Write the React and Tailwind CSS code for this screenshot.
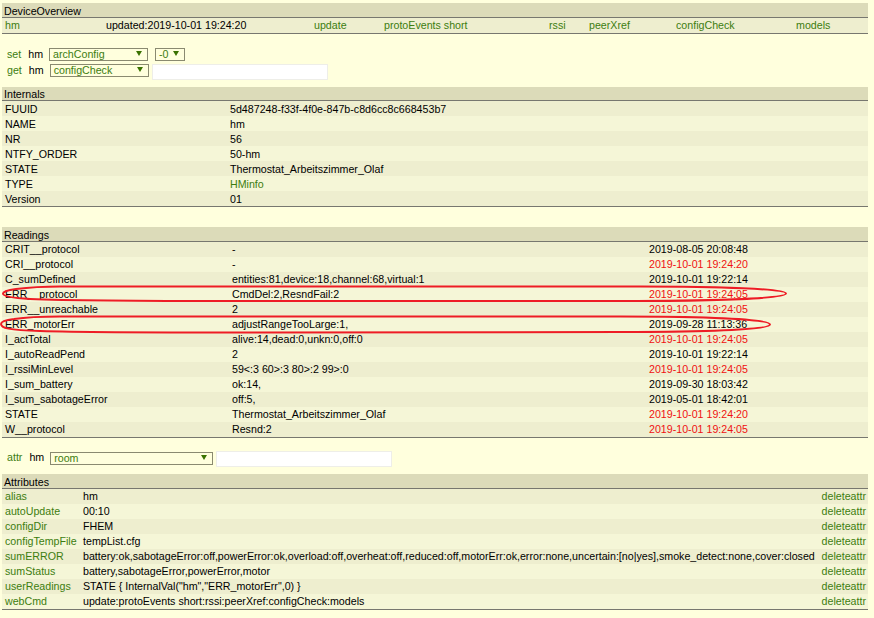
const internals = [
  ["FUUID", "5d487248-f33f-4f0e-847b-c8d6cc8c668453b7"],
  ["NAME", "hm"],
  ["NR", "56"],
  ["NTFY_ORDER", "50-hm"],
  ["STATE", "Thermostat_Arbeitszimmer_Olaf"],
  ["TYPE", "HMinfo", true],
  ["Version", "01"],
];

const readings = [
  ["CRIT__protocol", "-", "2019-08-05 20:08:48"],
  ["CRI__protocol", "-", "2019-10-01 19:24:20", true],
  ["C_sumDefined", "entities:81,device:18,channel:68,virtual:1", "2019-10-01 19:22:14"],
  ["ERR__protocol", "CmdDel:2,ResndFail:2", "2019-10-01 19:24:05", true],
  ["ERR__unreachable", "2", "2019-10-01 19:24:05", true],
  ["ERR_motorErr", "adjustRangeTooLarge:1,", "2019-09-28 11:13:36"],
  ["I_actTotal", "alive:14,dead:0,unkn:0,off:0", "2019-10-01 19:24:05", true],
  ["I_autoReadPend", "2", "2019-10-01 19:22:14"],
  ["I_rssiMinLevel", "59<:3 60>:3 80>:2 99>:0", "2019-10-01 19:24:05", true],
  ["I_sum_battery", "ok:14,", "2019-09-30 18:03:42"],
  ["I_sum_sabotageError", "off:5,", "2019-05-01 18:42:01"],
  ["STATE", "Thermostat_Arbeitszimmer_Olaf", "2019-10-01 19:24:20", true],
  ["W__protocol", "Resnd:2", "2019-10-01 19:24:05", true],
];

const attributes = [
  ["alias", "hm"],
  ["autoUpdate", "00:10"],
  ["configDir", "FHEM"],
  ["configTempFile", "tempList.cfg"],
  ["sumERROR", "battery:ok,sabotageError:off,powerError:ok,overload:off,overheat:off,reduced:off,motorErr:ok,error:none,uncertain:[no|yes],smoke_detect:none,cover:closed"],
  ["sumStatus", "battery,sabotageError,powerError,motor"],
  ["userReadings", 'STATE { InternalVal("hm","ERR_motorErr",0) }'],
  ["webCmd", "update:protoEvents short:rssi:peerXref:configCheck:models"],
];

function Header({ children, size = "h-[15px] leading-[16px]" }) {
  return (
    <div className={`${size} bg-[#dcdbb9] border-b border-[#77776f] pl-[2px] text-black`}>
      {children}
    </div>
  );
}

function Row({ index, leading = "leading-[15px]", children }) {
  return (
    <div className={`flex h-[15px] ${leading} ${index % 2 === 0 ? "bg-[#eeeecf]" : "bg-[#f5f6d7]"}`}>
      {children}
    </div>
  );
}

function Select({ label, width }) {
  return (
    <div className={`flex items-center justify-between h-[13px] border border-[#8a8a70] pl-[3px] pr-[5px] text-[#3d7d10] leading-[11px] ${width}`}>
      <span>{label}</span>
      <svg width="6" height="5" viewBox="0 0 6 5" className="mb-[2px]"><path d="M0 0h6L3 5z" fill="#3a7200" /></svg>
    </div>
  );
}

function Input() {
  return <div className="w-[176px] h-[16px] bg-white border border-[#eeeee8]" />;
}

export default function App() {
  return (
    <div
      className="relative w-[874px] h-[618px] overflow-hidden bg-[#ffffdd] text-[10.67px] text-black pl-[2px] pr-[6px] pt-[3px]"
      style={{ fontFamily: '"Liberation Sans", Arial, sans-serif' }}
    >
      {/* DeviceOverview */}
      <Header>DeviceOverview</Header>
      <div className="flex h-[16px] leading-[15px] bg-[#eeeecf] border-b border-[#77776f] text-[#3d7d10]">
        <span className="ml-[3px] w-[101px]">hm</span>
        <span className="w-[208px] text-black">updated:2019-10-01 19:24:20</span>
        <span className="w-[70px]">update</span>
        <span className="w-[165px]">protoEvents short</span>
        <span className="w-[40px]">rssi</span>
        <span className="w-[87px]">peerXref</span>
        <span className="w-[120px]">configCheck</span>
        <span>models</span>
      </div>

      {/* set / get */}
      <div className="mt-[14px] ml-[5px] flex items-center gap-[7px] h-[13px] leading-[13px]">
        <span className="text-[#3d7d10]">set</span>
        <span className="mr-[-1px]">hm</span>
        <Select label="archConfig" width="w-[99px]" />
        <Select label="-0" width="w-[30px]" />
      </div>
      <div className="mt-[3px] ml-[5px] flex items-start gap-[7px] h-[16px] leading-[13px]">
        <span className="text-[#3d7d10]">get</span>
        <span className="mr-[-1px]">hm</span>
        <Select label="configCheck" width="w-[99px]" />
        <div className="ml-[-4px]"><Input /></div>
      </div>

      {/* Internals */}
      <div className="mt-[7px]">
        <Header size="h-[14px] leading-[14px]">Internals</Header>
        {internals.map(([name, value, link], i) => (
          <Row key={name} index={i} leading="leading-[17px]">
            <span className="ml-[3px] w-[225px]">{name}</span>
            <span className={link ? "text-[#3d7d10]" : ""}>{value}</span>
          </Row>
        ))}
        <div className="h-px bg-[#77776f]" />
      </div>

      {/* Readings */}
      <div className="mt-[20px]">
        <Header>Readings</Header>
        {readings.map(([name, value, time, recent], i) => (
          <Row key={name} index={i}>
            <span className="ml-[3px] w-[227px]">{name}</span>
            <span className="w-[417px]">{value}</span>
            <span className={recent ? "text-[#f01010]" : ""}>{time}</span>
          </Row>
        ))}
        <div className="h-px bg-[#77776f]" />
      </div>

      {/* attr */}
      <div className="mt-[13px] ml-[5px] flex items-start gap-[7px] h-[16px] leading-[13px]">
        <span className="text-[#3d7d10]">attr</span>
        <span className="mr-[-1px]">hm</span>
        <div className="mt-[1px]"><Select label="room" width="w-[163px]" /></div>
        <div className="ml-[-4px]"><Input /></div>
      </div>

      {/* Attributes */}
      <div className="mt-[7px]">
        <Header>Attributes</Header>
        {attributes.map(([name, value], i) => (
          <Row key={name} index={i}>
            <span className="ml-[3px] w-[78px] text-[#3d7d10]">{name}</span>
            <span className="flex-1 whitespace-nowrap">{value}</span>
            <span className="mr-[2px] text-[#3d7d10]">deleteattr</span>
          </Row>
        ))}
        <div className="h-px bg-[#77776f]" />
      </div>

      {/* hand drawn red marks */}
      <svg className="absolute left-0 top-0 pointer-events-none" width="874" height="618" fill="none" stroke="#ee1c25" strokeWidth="2">
        <path d="M16 289 C8 290 3 292 3 293.5 C3 296 12 298 30 299 C80 301 140 301 240 301 L620 301 C700 301 786 299 786 293.5 C786 289 720 286.5 640 286.5 L60 286.5 C40 286.5 28 287.5 16 289" />
        <path d="M14 319 C6 320 1 322 1 324 C1 328 8 330 40 331 C90 332.5 140 332.5 240 332.5 L620 332 C700 332 770 330 770 324.5 C770 319 700 316.5 620 316.5 L60 316.5 C40 316.5 24 317.5 14 319" />
      </svg>
    </div>
  );
}
